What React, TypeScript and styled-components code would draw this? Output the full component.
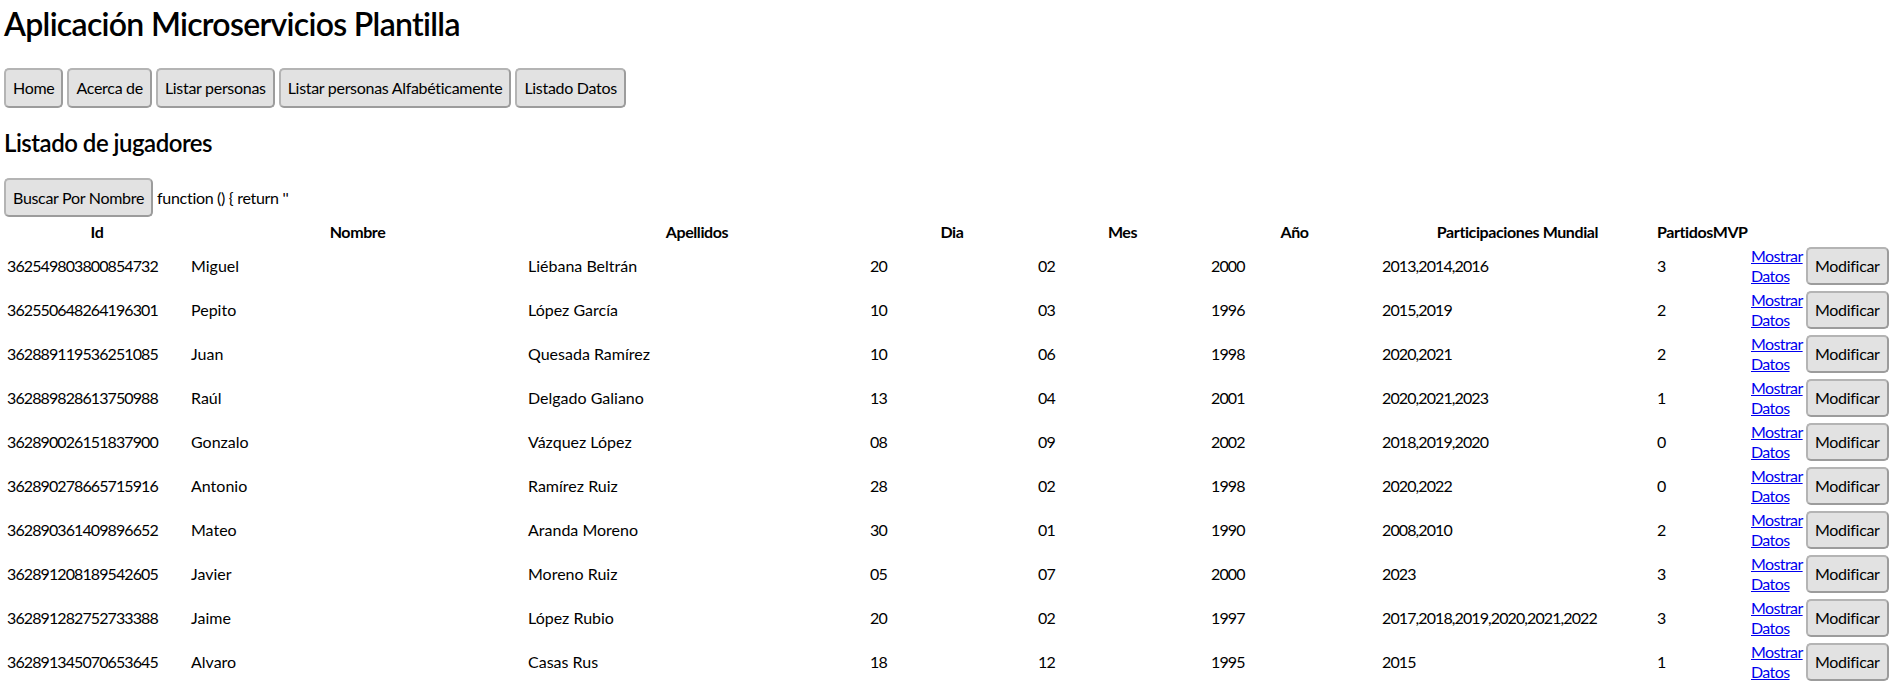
import React from "react";
import styled, { createGlobalStyle } from "styled-components";

const GlobalStyle = createGlobalStyle`
  html, body {
    margin: 0;
    padding: 0;
    background: #ffffff;
    color: #000000;
    font-family: "Lato", "Open Sans", "Noto Sans", sans-serif;
    font-size: 16px;
    line-height: 20px;
  }
`;

const Page = styled.div`
  padding: 0 4px;
`;

const Title = styled.h1`
  margin: 4px 0 24px;
  font-size: 32px;
  line-height: 40px;
  font-weight: 600;
  letter-spacing: -0.7px;
`;

const Nav = styled.nav`
  display: flex;
  gap: 4px;
  margin: 0;
`;

const Button = styled.button<{ $h?: number }>`
  box-sizing: border-box;
  height: ${(p) => p.$h ?? 40}px;
  padding: 0 7px;
  font-family: inherit;
  font-size: 16px;
  line-height: 20px;
  color: #000;
  background: #e2e2e2;
  border: 2px solid #9c9c9c;
  border-top-color: #b4b4b4;
  border-left-color: #b4b4b4;
  border-radius: 5px;
  cursor: pointer;
  letter-spacing: -0.3px;
  white-space: nowrap;
`;

const Subtitle = styled.h2`
  margin: 20px 0;
  font-size: 24px;
  line-height: 30px;
  font-weight: 600;
  letter-spacing: -0.5px;
`;

const SearchRow = styled.div`
  display: flex;
  align-items: center;
  gap: 4px;
  letter-spacing: -0.3px;
`;

const Table = styled.table`
  table-layout: fixed;
  border-collapse: separate;
  border-spacing: 2px;
  width: 1886px;
  margin-top: 2px;
  font-size: 16px;
`;

const Th = styled.th`
  padding: 1px;
  font-weight: 700;
  letter-spacing: -0.4px;
  text-align: center;
  vertical-align: middle;
  white-space: nowrap;
`;

const Td = styled.td<{ $num?: boolean }>`
  padding: 1px;
  height: 40px;
  text-align: left;
  vertical-align: middle;
  white-space: nowrap;
  letter-spacing: ${(p) => (p.$num ? "-0.9px" : "0px")};
`;

const ActionCell = styled.td`
  padding: 1px;
  height: 40px;
  vertical-align: middle;
`;

const Link = styled.a`
  color: #0000ee;
  font-size: 16px;
  letter-spacing: -0.6px;
  text-decoration: underline;
  cursor: pointer;
`;

const widths = [182, 335, 340, 166, 171, 169, 273, 92, 53, 83];
const headers = ["Id", "Nombre", "Apellidos", "Dia", "Mes", "Año", "Participaciones Mundial", "PartidosMVP", "", ""];
const textColumns = new Set([1, 2]);

type Jugador = [string, string, string, string, string, string, string, string];

const jugadores: Jugador[] = [
  ["362549803800854732", "Miguel", "Liébana Beltrán", "20", "02", "2000", "2013,2014,2016", "3"],
  ["362550648264196301", "Pepito", "López García", "10", "03", "1996", "2015,2019", "2"],
  ["362889119536251085", "Juan", "Quesada Ramírez", "10", "06", "1998", "2020,2021", "2"],
  ["362889828613750988", "Raúl", "Delgado Galiano", "13", "04", "2001", "2020,2021,2023", "1"],
  ["362890026151837900", "Gonzalo", "Vázquez López", "08", "09", "2002", "2018,2019,2020", "0"],
  ["362890278665715916", "Antonio", "Ramírez Ruiz", "28", "02", "1998", "2020,2022", "0"],
  ["362890361409896652", "Mateo", "Aranda Moreno", "30", "01", "1990", "2008,2010", "2"],
  ["362891208189542605", "Javier", "Moreno Ruiz", "05", "07", "2000", "2023", "3"],
  ["362891282752733388", "Jaime", "López Rubio", "20", "02", "1997", "2017,2018,2019,2020,2021,2022", "3"],
  ["362891345070653645", "Alvaro", "Casas Rus", "18", "12", "1995", "2015", "1"],
];

export default function App() {
  return (
    <Page>
      <GlobalStyle />
      <Title>Aplicación Microservicios Plantilla</Title>
      <Nav>
        <Button>Home</Button>
        <Button>Acerca de</Button>
        <Button>Listar personas</Button>
        <Button>Listar personas Alfabéticamente</Button>
        <Button>Listado Datos</Button>
      </Nav>
      <Subtitle>Listado de jugadores</Subtitle>
      <SearchRow>
        <Button $h={39}>Buscar Por Nombre</Button>
        <span>function () {"{"} return ''</span>
      </SearchRow>
      <Table>
        <colgroup>
          {widths.map((w, i) => (
            <col key={i} style={{ width: w }} />
          ))}
        </colgroup>
        <thead>
          <tr>
            {headers.map((h, i) => (
              <Th key={i}>{h}</Th>
            ))}
          </tr>
        </thead>
        <tbody>
          {jugadores.map((j) => (
            <tr key={j[0]}>
              {j.map((v, i) => (
                <Td key={i} $num={!textColumns.has(i)}>
                  {v}
                </Td>
              ))}
              <ActionCell>
                <Link href="#">Mostrar Datos</Link>
              </ActionCell>
              <ActionCell>
                <Button $h={38}>Modificar</Button>
              </ActionCell>
            </tr>
          ))}
        </tbody>
      </Table>
    </Page>
  );
}
